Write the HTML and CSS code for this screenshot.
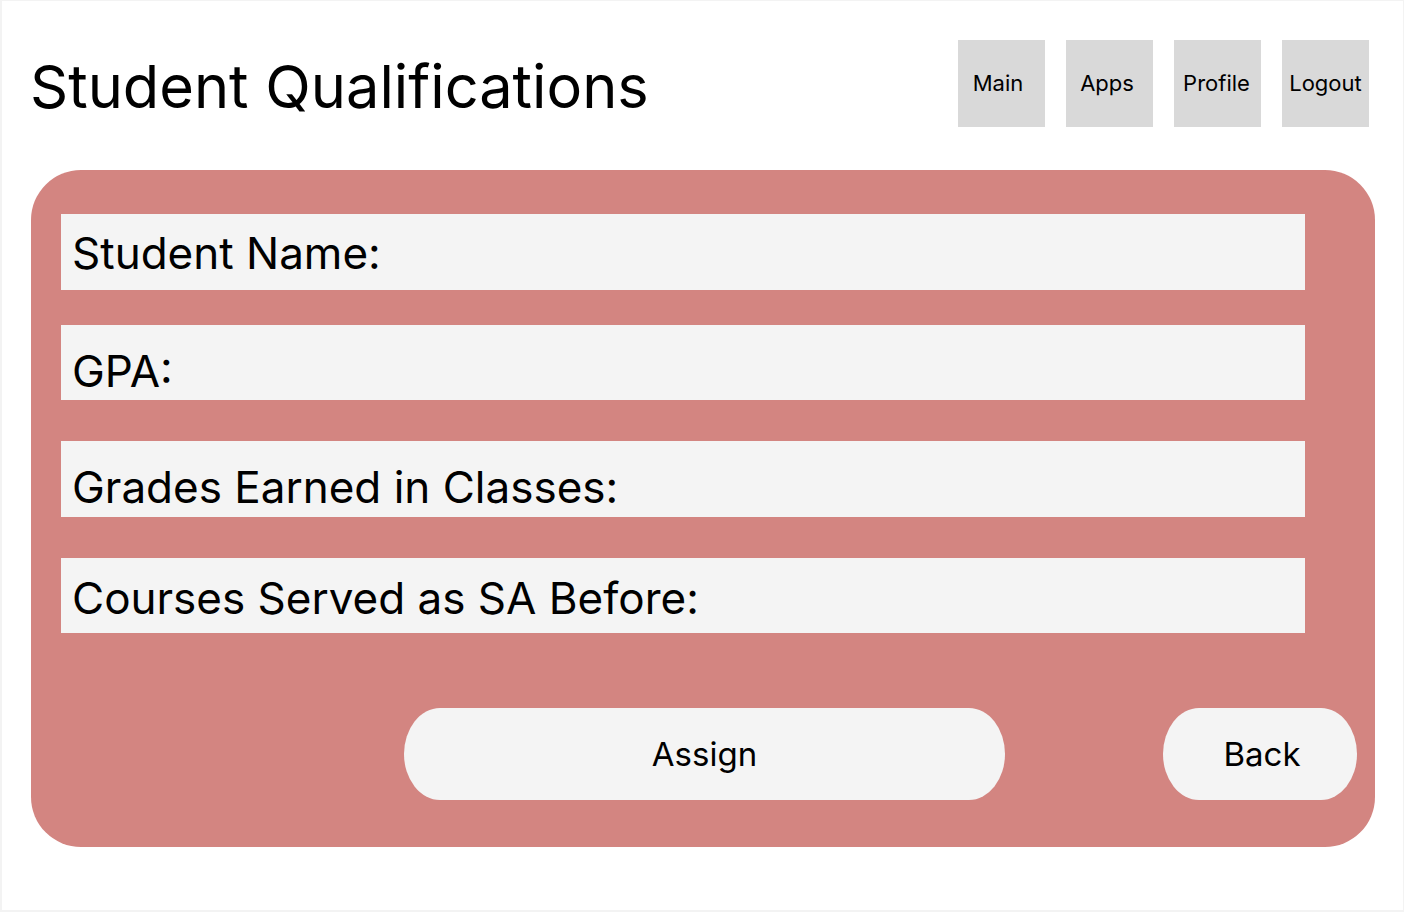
FILE: index.html
```html
<!DOCTYPE html>
<html lang="en">
<head>
<meta charset="utf-8">
<title>Student Qualifications</title>
<link rel="stylesheet" href="styles.css">
</head>
<body>
<div class="frame">
  <header class="header">
    <h1 class="title">Student Qualifications</h1>
    <nav class="nav">
      <a class="nav-btn" href="#">Main</a>
      <a class="nav-btn" href="#">Apps</a>
      <a class="nav-btn" href="#">Profile</a>
      <a class="nav-btn" href="#">Logout</a>
    </nav>
  </header>
  <main class="card">
    <div class="field field-name">Student Name:</div>
    <div class="field field-gpa">GPA:</div>
    <div class="field field-grades">Grades Earned in Classes:</div>
    <div class="field field-courses">Courses Served as SA Before:</div>
    <div class="actions">
      <button class="pill pill-assign" type="button">Assign</button>
      <button class="pill pill-back" type="button">Back</button>
    </div>
  </main>
</div>
</body>
</html>
```

FILE: styles.css
```css
html {
  background: #f3f3f3;
}
body {
  margin: 0;
  padding: 1px 1px 2px 2px;
  font-family: Inter, "Noto Sans", "Liberation Sans", sans-serif;
  color: #000;
}
.frame {
  background: #ffffff;
  height: 909px;
  box-sizing: border-box;
  padding: 39px 34px 0 29px;
}
.header {
  display: flex;
  align-items: flex-start;
  justify-content: space-between;
  height: 87px;
}
.title {
  margin: 17px 0 0 -1px;
  font-size: 59.5px;
  line-height: 1;
  font-weight: 400;
}
.nav {
  display: flex;
  gap: 21px;
}
.nav-btn {
  width: 87px;
  height: 87px;
  box-sizing: border-box;
  background: #d9d9d9;
  display: flex;
  align-items: center;
  justify-content: center;
  padding-bottom: 2px;
  font-size: 22px;
  color: #000;
  text-decoration: none;
}
.nav-btn:first-child { padding-right: 7px; }
.nav-btn:nth-child(2) { padding-right: 5px; }
.nav-btn:nth-child(3) { padding-right: 2px; }
.card {
  margin-top: 43px;
  width: 1344px;
  height: 677px;
  box-sizing: border-box;
  background: #d38581;
  border-radius: 50px;
  padding: 44px 70px 0 30px;
  display: flex;
  flex-direction: column;
}
.field {
  height: 76px;
  box-sizing: border-box;
  background: #f4f4f4;
  font-size: 44px;
  line-height: 1;
  padding-left: 11px;
  white-space: nowrap;
}
.field-name { padding-top: 17px; }
.field-gpa { margin-top: 35px; padding-top: 24px; height: 75px; }
.field-grades { margin-top: 41px; padding-top: 24px; }
.field-courses { margin-top: 41px; padding-top: 18px; height: 75px; }
.actions {
  display: flex;
  margin-top: 75px;
  margin-right: -52px;
  padding-left: 343px;
}
.pill {
  height: 92px;
  border: none;
  background: #f4f4f4;
  border-radius: 36px / 46px;
  font-family: inherit;
  font-size: 33px;
  color: #000;
  padding: 0;
}
.pill-assign { width: 601px; }
.pill-back { width: 194px; margin-left: auto; padding-left: 4px; }
```
